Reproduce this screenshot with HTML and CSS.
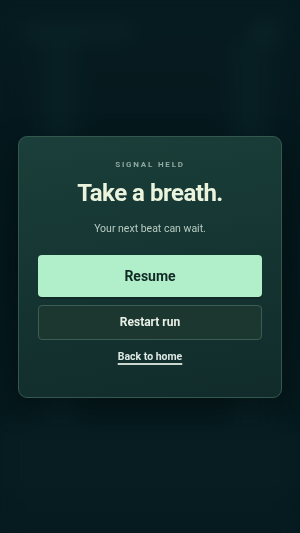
FILE: index.html
```html
<!DOCTYPE html>
<html lang="en">
<head>
    <meta charset="UTF-8">
    <meta name="viewport" content="width=device-width, initial-scale=1.0">
    <title>Paused</title>
    <link rel="stylesheet" href="styles.css">
</head>
<body>

    <!-- Blurred game scene behind the pause card -->
    <div class="scene">
        <div class="scene-bar"></div>
        <div class="scene-dot"></div>
        <div class="scene-col scene-col-a"></div>
        <div class="scene-col scene-col-b"></div>
        <div class="scene-floor"></div>
    </div>

    <div class="pause-card">
        <p class="eyebrow">Signal held</p>
        <h1 class="title">Take a breath.</h1>
        <p class="subtitle">Your next beat can wait.</p>
        <div class="actions">
            <button class="btn btn-primary">Resume</button>
            <button class="btn btn-secondary">Restart run</button>
        </div>
        <a class="home-link" href="#">Back to home</a>
    </div>

</body>
</html>
```

FILE: styles.css
```css
* {
    margin: 0;
    padding: 0;
    box-sizing: border-box;
    font-family: Roboto, 'DejaVu Sans Condensed', sans-serif;
}

body {
    overflow: hidden;
    display: flex;
    justify-content: center;
    align-items: center;
    height: 100vh;
    padding: 0 18px;
    background: #051a1e;
}

/* Nền mờ */
.scene {
    position: fixed;
    inset: 0;
    background: linear-gradient(180deg, #061b20 0%, #04161a 50%, #061c20 100%);
    filter: blur(10px);
    z-index: 0;
}

.scene-bar {
    position: absolute;
    top: 26px;
    left: 20px;
    width: 115px;
    height: 12px;
    background: #0b2326;
    border-radius: 6px;
}

.scene-dot {
    position: absolute;
    top: 24px;
    right: 22px;
    width: 26px;
    height: 16px;
    background: #0c2528;
    border-radius: 8px;
}

.scene-col {
    position: absolute;
    background: #071e22;
}

.scene-col-a {
    top: 40px;
    left: 40px;
    width: 40px;
    height: 400px;
}

.scene-col-b {
    top: 40px;
    right: 30px;
    width: 40px;
    height: 420px;
}

.scene-floor {
    position: absolute;
    left: 0;
    right: 0;
    bottom: 40px;
    height: 70px;
    background: #071d21;
}

/* Khung tạm dừng */
.pause-card {
    position: relative;
    z-index: 1;
    width: 100%;
    display: flex;
    flex-direction: column;
    align-items: center;
    text-align: center;
    padding: 23px 19px 34px;
    background: linear-gradient(170deg, #1b3f3a 0%, #143330 60%, #112b2b 100%);
    border: 1px solid #33594f;
    border-radius: 9px;
    box-shadow: 0 10px 30px rgba(0, 0, 0, 0.35);
}

.eyebrow {
    font-size: 8px;
    font-weight: bold;
    letter-spacing: 1.8px;
    text-transform: uppercase;
    color: #8eaaa1;
    line-height: 10px;
}

.title {
    margin-top: 8px;
    font-size: 24px;
    font-weight: bold;
    color: #eaf3dc;
    line-height: 30px;
    letter-spacing: -0.5px;
}

.subtitle {
    margin-top: 14px;
    font-size: 10.5px;
    color: #b9cbc2;
    line-height: 14px;
}

.actions {
    width: 100%;
    margin-top: 19px;
    display: flex;
    flex-direction: column;
    gap: 8px;
}

.btn {
    width: 100%;
    border-radius: 4px;
    font-weight: bold;
    cursor: pointer;
}

.btn-primary {
    height: 42px;
    background: #b0efca;
    border: none;
    color: #112a26;
    font-size: 14px;
    box-shadow: 0 2px 0 rgba(0, 0, 0, 0.2);
}

.btn-secondary {
    height: 35px;
    background: #1c3730;
    border: 1px solid #3c5d53;
    color: #e8efe6;
    font-size: 12px;
}

.home-link {
    margin-top: 10px;
    font-size: 10.5px;
    font-weight: bold;
    color: #dce9e2;
    text-decoration: underline;
    text-decoration-thickness: 2px;
    text-underline-offset: 3px;
    text-decoration-color: #c8d6cf;
}
```
